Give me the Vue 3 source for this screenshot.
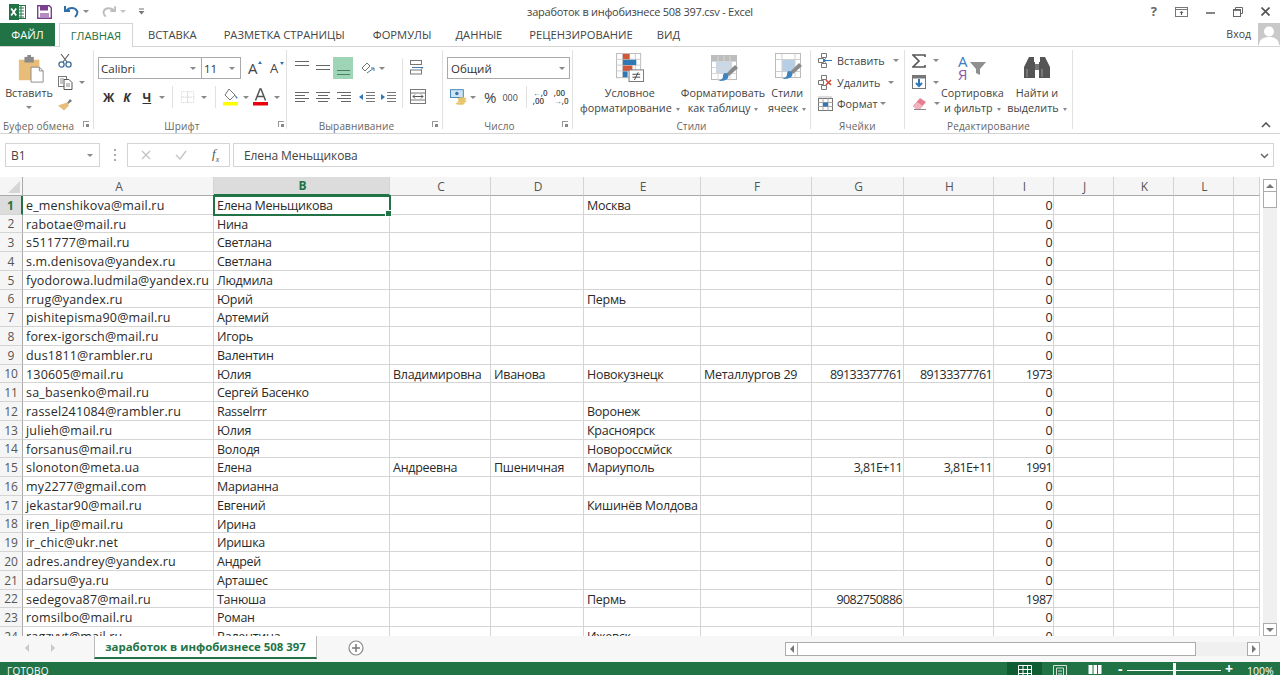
<script setup>
const tabs = [
  ['ВСТАВКА', 't1'], ['РАЗМЕТКА СТРАНИЦЫ', 't2'], ['ФОРМУЛЫ', 't3'],
  ['ДАННЫЕ', 't4'], ['РЕЦЕНЗИРОВАНИЕ', 't5'], ['ВИД', 't6'],
]
const cols = ['A', 'B', 'C', 'D', 'E', 'F', 'G', 'H', 'I', 'J', 'K', 'L', '']
const raw = [
  ['e_menshikova@mail.ru', 'Елена Меньщикова', '', '', 'Москва', '', '', '', '0'],
  ['rabotae@mail.ru', 'Нина', '', '', '', '', '', '', '0'],
  ['s511777@mail.ru', 'Светлана', '', '', '', '', '', '', '0'],
  ['s.m.denisova@yandex.ru', 'Светлана', '', '', '', '', '', '', '0'],
  ['fyodorowa.ludmila@yandex.ru', 'Людмила', '', '', '', '', '', '', '0'],
  ['rrug@yandex.ru', 'Юрий', '', '', 'Пермь', '', '', '', '0'],
  ['pishitepisma90@mail.ru', 'Артемий', '', '', '', '', '', '', '0'],
  ['forex-igorsch@mail.ru', 'Игорь', '', '', '', '', '', '', '0'],
  ['dus1811@rambler.ru', 'Валентин', '', '', '', '', '', '', '0'],
  ['130605@mail.ru', 'Юлия', 'Владимировна', 'Иванова', 'Новокузнецк', 'Металлургов 29', '89133377761', '89133377761', '1973'],
  ['sa_basenko@mail.ru', 'Сергей Басенко', '', '', '', '', '', '', '0'],
  ['rassel241084@rambler.ru', 'Rasselrrr', '', '', 'Воронеж', '', '', '', '0'],
  ['julieh@mail.ru', 'Юлия', '', '', 'Красноярск', '', '', '', '0'],
  ['forsanus@mail.ru', 'Володя', '', '', 'Новороссмйск', '', '', '', '0'],
  ['slonoton@meta.ua', 'Елена', 'Андреевна', 'Пшеничная', 'Мариуполь', '', '3,81E+11', '3,81E+11', '1991'],
  ['my2277@gmail.com', 'Марианна', '', '', '', '', '', '', '0'],
  ['jekastar90@mail.ru', 'Евгений', '', '', 'Кишинёв Молдова', '', '', '', '0'],
  ['iren_lip@mail.ru', 'Ирина', '', '', '', '', '', '', '0'],
  ['ir_chic@ukr.net', 'Иришка', '', '', '', '', '', '', '0'],
  ['adres.andrey@yandex.ru', 'Андрей', '', '', '', '', '', '', '0'],
  ['adarsu@ya.ru', 'Арташес', '', '', '', '', '', '', '0'],
  ['sedegova87@mail.ru', 'Танюша', '', '', 'Пермь', '', '9082750886', '', '1987'],
  ['romsilbo@mail.ru', 'Роман', '', '', '', '', '', '', '0'],
  ['ragzvvt@mail.ru', 'Валентина', '', '', 'Ижевск', '', '', '', '0'],
]
const rows = raw.map((r, i) => ({ n: i + 1, cells: [...r, '', '', '', ''] }))
</script>

<template>
  <div class="app">
    <header class="titlebar">
      <div class="qat">
        <svg class="q-xl" width="17" height="16" viewBox="0 0 17 16"><rect x="6" y="1.5" width="10.5" height="13" fill="#fff" stroke="#217346"/><path d="M9 4h6M9 7h6M9 10h6M9 13h6M12 2v12" stroke="#217346"/><rect width="10" height="16" fill="#217346"/><path d="M2.2 4.5l5 7M7.2 4.5l-5 7" stroke="#fff" stroke-width="1.8"/></svg>
        <svg class="q-save" width="15" height="14" viewBox="0 0 15 14"><path d="M.7.7h11.6l2 2v10.6H.7z" fill="#fff" stroke="#7b3f8f" stroke-width="1.4"/><rect x="3" y="1" width="8" height="4.5" fill="#7b3f8f"/><rect x="3" y="8" width="9" height="5" fill="#b58cc2"/></svg>
        <svg class="q-undo" width="15" height="13" viewBox="0 0 15 13"><path d="M1 1v5h5" fill="none" stroke="#2f6fa8" stroke-width="2"/><path d="M2 6c3-4 9-4 11 0 1 2 0 4-2 6" fill="none" stroke="#2f6fa8" stroke-width="2"/></svg>
        <span class="caret q-c1"></span>
        <svg class="q-redo" width="14" height="13" viewBox="0 0 15 13"><path d="M14 1v5H9" fill="none" stroke="#bdbdbd" stroke-width="2"/><path d="M13 6C10 2 4 2 2 6c-1 2 0 4 2 6" fill="none" stroke="#bdbdbd" stroke-width="2"/></svg>
        <span class="caret pale q-c2"></span>
        <svg class="q-cust" width="7" height="7" viewBox="0 0 7 7"><path d="M1 1h5" stroke="#777"/><path d="M.5 3h6L3.5 6.5z" fill="#777"/></svg>
      </div>
      <div class="title">заработок в инфобизнесе 508 397.csv - Excel</div>
      <div class="winbtns">
        <span class="help">?</span>
        <svg width="13" height="10" viewBox="0 0 13 10"><rect x=".5" y=".5" width="12" height="9" fill="none" stroke="#777"/><path d="M.5 2.5h12" stroke="#777"/><path d="M6.5 4l-2 2h1.4v2h1.2V6h1.4z" fill="#555"/></svg>
        <svg width="9" height="10" viewBox="0 0 9 10"><path d="M0 6h9" stroke="#666" stroke-width="1.6"/></svg>
        <svg width="10" height="10" viewBox="0 0 10 10"><path d="M2.500 2.500V.5h7v6h-2" fill="none" stroke="#666"/><rect x=".5" y="2.500" width="7" height="7" fill="none" stroke="#666"/><path d="M.5 3.200h7" stroke="#666" stroke-width="1.300"/></svg>
        <svg width="9" height="9" viewBox="0 0 9 9"><path d="M.5.5l8 8M8.500.5l-8 8" stroke="#555" stroke-width="1.700"/></svg>
      </div>
    </header>

    <nav class="tabsbar">
      <div class="tab-file">ФАЙЛ</div>
      <div class="tab-home">ГЛАВНАЯ</div>
      <div v-for="t in tabs" :key="t[0]" class="tab" :class="t[1]">{{ t[0] }}</div>
      <div class="signin">
        <span>Вход</span>
        <svg class="avatar" width="22" height="22" viewBox="0 0 22 22"><rect width="22" height="22" fill="#c9c9c9"/><circle cx="11" cy="8.5" r="5" fill="#fff"/><path d="M1 22c0-6 5-8 10-8s10 2 10 8z" fill="#fff"/></svg>
      </div>
    </nav>

    <section class="ribbon">
      <div class="grp g-clip">
        <div class="grp-body">
          <div class="big paste">
            <svg class="big-ic" width="28" height="29" viewBox="0 0 30 31"><path d="M2 5h22v22H2z" fill="#e7bd79"/><rect x="8" y="2" width="10" height="6" fill="#8a8a8a"/><rect x="11" y="0" width="4" height="3" fill="#8a8a8a"/><path d="M15 13h9l4 4v12H15z" fill="#fff" stroke="#888"/><path d="M24 13v4h4" fill="none" stroke="#888"/></svg>
            <span class="big-t">Вставить</span>
            <span class="caret big-c"></span>
          </div>
          <div class="smalls clip-s">
            <svg width="14" height="14" viewBox="0 0 14 14"><path d="M3 0l6 8M11 0L5 8" stroke="#666" stroke-width="1.2"/><circle cx="3.5" cy="10.5" r="2.6" fill="none" stroke="#3f6e9c" stroke-width="1.3"/><circle cx="10.5" cy="10.5" r="2.6" fill="none" stroke="#3f6e9c" stroke-width="1.3"/></svg>
            <div class="s-line">
              <svg width="15" height="14" viewBox="0 0 15 14"><rect x=".5" y=".5" width="8" height="10" fill="#fff" stroke="#777"/><path d="M6 3.5h5l3 3v7H6z" fill="#fff" stroke="#555"/><path d="M2 3h4M2 5h3M2 7h3M8 8h4M8 10h4" stroke="#8a8a8a"/></svg>
              <span class="caret clip-c"></span>
            </div>
            <svg width="15" height="14" viewBox="0 0 15 14"><path d="M9 6l3-4 2 2-4 3z" fill="#777"/><path d="M9 5.500l2 3-5 5-6-5z" fill="#e7bd79"/></svg>
          </div>
        </div>
        <div class="grp-lab lab-clip">Буфер обмена<span class="launch l-clip"></span></div>
      </div>

      <div class="grp g-font">
        <div class="grp-body col">
          <div class="frow">
            <div class="combo c-font"><span>Calibri</span><span class="caret"></span></div>
            <div class="combo c-size"><span>11</span><span class="caret"></span></div>
            <span class="growA">A<i class="up"></i></span>
            <span class="growA smallA">A<i class="down"></i></span>
          </div>
          <div class="frow2">
            <b class="fb">Ж</b>
            <b class="fi">К</b>
            <b class="fu">Ч</b>
            <span class="caret f-c1"></span>
            <span class="vsep vs1"></span>
            <svg class="f-bord" width="14" height="13" viewBox="0 0 17 15"><rect x=".5" y=".5" width="15" height="13" fill="none" stroke="#c9c9c9" stroke-dasharray="1 1"/><path d="M8 .5v13M.5 7h15" stroke="#bbb" stroke-dasharray="1 1"/></svg>
            <span class="caret f-c2"></span>
            <span class="vsep vs2"></span>
            <svg class="f-fill" width="16" height="18" viewBox="0 0 16 18"><path d="M6 1l6 6-5 5-5-5z" fill="#fff" stroke="#777"/><path d="M12 7c2 1 3 3 2 4-1-1-2-2-2-4z" fill="#4a83b5"/><rect y="14" width="15" height="3.500" fill="#ffff00"/></svg>
            <span class="caret f-c3"></span>
            <svg class="f-col" width="15" height="18" viewBox="0 0 15 18"><path d="M2.500 12.500L7 1h1l4.500 11.500M4.200 8.500h6.600" fill="none" stroke="#555" stroke-width="1.500"/><rect y="14" width="15" height="3.500" fill="#e8000b"/></svg>
            <span class="caret f-c4"></span>
          </div>
        </div>
        <div class="grp-lab lab-font">Шрифт<span class="launch l-font"></span></div>
      </div>

      <div class="grp g-align">
        <div class="grp-body alignbody">
          <div class="col">
            <div class="arow">
              <svg width="15" height="22" viewBox="0 0 15 22" class="a1"><path d="M0 4.500h14M0 8.500h14" stroke="#666"/></svg>
              <svg width="14" height="22" viewBox="0 0 14 22" class="a2"><path d="M0 8.500h14M0 12.500h14" stroke="#666"/></svg>
              <span class="a3"><svg width="13" height="22" viewBox="0 0 13 22"><path d="M0 13.500h13M0 17.500h13" stroke="#4f7f63"/></svg></span>
              <svg width="16" height="14" viewBox="0 0 16 14" class="a4"><path d="M2 7l5-5 3 3-5 5z" fill="none" stroke="#777"/><path d="M7 12l7-5M11 7h3v3" fill="none" stroke="#4a7da8"/></svg>
              <span class="caret a5"></span>
            </div>
            <div class="arow arow2">
              <svg width="15" height="12" viewBox="0 0 15 12" class="a1"><path d="M0 1.500h14M0 4.500h10M0 7.500h14M0 10.500h10" stroke="#666"/></svg>
              <svg width="14" height="12" viewBox="0 0 14 12" class="a2"><path d="M0 1.500h14M2 4.500h10M0 7.500h14M2 10.500h10" stroke="#666"/></svg>
              <svg width="14" height="12" viewBox="0 0 14 12" class="a6"><path d="M0 1.500h14M4 4.500h10M0 7.500h14M4 10.500h10" stroke="#666"/></svg>
              <svg width="16" height="12" viewBox="0 0 16 12" class="a7"><path d="M7 1.500h9M7 4.500h9M7 7.500h9M7 10.500h9" stroke="#777"/><path d="M0 6l4-3v6z" fill="#2f77b5"/></svg>
              <svg width="16" height="12" viewBox="0 0 16 12" class="a8"><path d="M7 1.500h9M7 4.500h9M7 7.500h9M7 10.500h9" stroke="#777"/><path d="M5 6L1 3v6z" fill="#2f77b5"/></svg>
            </div>
          </div>
          <span class="vsep vs3"></span>
          <div class="col acol2">
            <svg width="16" height="15" viewBox="0 0 16 15"><rect x=".5" y=".5" width="11" height="4" fill="none" stroke="#777"/><rect x=".5" y="10" width="11" height="4" fill="none" stroke="#777"/><path d="M2 7.500h11l-2 2" fill="none" stroke="#3c7ab0"/></svg>
            <svg class="am" width="16" height="15" viewBox="0 0 16 15"><rect x=".5" y=".5" width="15" height="14" fill="none" stroke="#777"/><path d="M.5 4h15M.5 11h15" stroke="#777"/><path d="M3 7.500h10M3 7.500l2-2M3 7.500l2 2M13 7.500l-2-2M13 7.500l-2 2" stroke="#555" fill="none"/></svg>
          </div>
        </div>
        <div class="grp-lab lab-align">Выравнивание<span class="launch l-align"></span></div>
      </div>

      <div class="grp g-num">
        <div class="grp-body col">
          <div class="combo c-num"><span>Общий</span><span class="caret"></span></div>
          <div class="nrow">
            <svg class="n1" width="18" height="16" viewBox="0 0 21 18"><rect x=".5" y=".5" width="15" height="9" fill="#cfe3f2" stroke="#2f77b5"/><circle cx="8" cy="5" r="2" fill="#2f77b5"/><ellipse cx="14" cy="11" rx="5" ry="1.800" fill="#e9c46a"/><ellipse cx="14" cy="14" rx="5" ry="1.800" fill="#e9c46a"/><ellipse cx="12" cy="16.500" rx="5" ry="1.500" fill="#e9c46a"/></svg>
            <span class="caret n2"></span>
            <span class="pct">%</span>
            <span class="thou">000</span>
            <span class="vsep vs4"></span>
            <span class="dec d1"><i>←</i>,0<br>,00</span>
            <span class="dec d2">,00<br><i>→</i>,0</span>
          </div>
        </div>
        <div class="grp-lab lab-num">Число<span class="launch l-num"></span></div>
      </div>

      <div class="grp g-styles">
        <div class="grp-body">
          <div class="big st1">
            <svg class="big-ic" width="29" height="29" viewBox="0 0 30 30"><rect x=".5" y=".5" width="25" height="25" fill="#fff" stroke="#bbb"/><path d="M.5 6.500h25M.5 12.500h25M.5 18.500h25M7 .5v25M14 .5v25M20 .5v25" stroke="#ccc"/><rect x="7" y="1" width="7" height="5.500" fill="#d0573a"/><rect x="7" y="7" width="14" height="5.500" fill="#2f77b5"/><rect x="7" y="13" width="10" height="5.500" fill="#d0573a"/><rect x="7" y="19" width="5" height="6" fill="#2f77b5"/><rect x="13.500" y="17.500" width="15" height="12" fill="#fff" stroke="#777"/><path d="M17 22h8M17 25h8M23 20l-4 8" stroke="#444" fill="none"/></svg>
            <span class="big-t">Условное</span>
            <span class="big-t">форматирование<i class="caret inl"></i></span>
          </div>
          <div class="big st2">
            <svg class="big-ic" width="28" height="28" viewBox="0 0 28 28"><rect x=".5" y=".5" width="25" height="24" fill="#fff" stroke="#bbb"/><rect x="1" y="1" width="24" height="5" fill="#bdbdbd"/><rect x="5" y="6" width="16" height="12" fill="#c7d8ea"/><path d="M.5 6.500h25M.5 12.500h25M.5 18.500h25M7 .5v25M13 .5v25M19 .5v25" stroke="#d6d6d6"/><path d="M15 19l9-9 3 3-9 8z" fill="#8a8a8a"/><path d="M14 18c3 0 4 3 3 5-2 3-7 3-10 3 3-1 5-2 5-5 0-2 1-3 2-3z" fill="#3c83c0"/></svg>
            <span class="big-t">Форматировать</span>
            <span class="big-t">как таблицу<i class="caret inl"></i></span>
          </div>
          <div class="big st3">
            <svg class="big-ic" width="28" height="28" viewBox="0 0 28 28"><rect x=".5" y=".5" width="25" height="24" fill="#fff" stroke="#bbb"/><rect x="7" y="6" width="13" height="12" fill="#b7cfe6"/><path d="M.5 6.500h25M.5 18.500h25M7 .5v25M20 .5v25" stroke="#cfcfcf"/><path d="M15 19l9-9 3 3-9 8z" fill="#8a8a8a"/><path d="M14 18c3 0 4 3 3 5-2 3-7 3-10 3 3-1 5-2 5-5 0-2 1-3 2-3z" fill="#3c83c0"/></svg>
            <span class="big-t">Стили</span>
            <span class="big-t">ячеек<i class="caret inl"></i></span>
          </div>
        </div>
        <div class="grp-lab lab-styles">Стили</div>
      </div>

      <div class="grp g-cells">
        <div class="grp-body col cells">
          <div class="cl">
            <svg width="15" height="15" viewBox="0 0 15 15"><path d="M3.500.5h5v4h-5zM3.500 10.500h5v4h-5zM.5 5.500h5v4h-5z" fill="#fff" stroke="#777"/><path d="M5 7.500h9M8 5.500l-3 2 3 2" fill="none" stroke="#2f77b5"/></svg>
            <span class="cl-t">Вставить</span><span class="caret cc1"></span>
          </div>
          <div class="cl">
            <svg width="15" height="15" viewBox="0 0 15 15"><path d="M3.500.5h5v4h-5zM3.500 10.500h5v4h-5zM.5 5.500h5v4h-5z" fill="#fff" stroke="#777"/><path d="M8 5l5 5M13 5l-5 5" stroke="#d3412d" stroke-width="1.500"/></svg>
            <span class="cl-t">Удалить</span><span class="caret cc2"></span>
          </div>
          <div class="cl">
            <svg width="15" height="15" viewBox="0 0 15 15"><rect x=".5" y="2.500" width="14" height="12" fill="#fff" stroke="#777"/><path d="M.5 1h14" stroke="#777" stroke-dasharray="1 1"/><path d="M.5 6.500h14M.5 10.500h14M5 2.500v12M10 2.500v12" stroke="#aaa"/><rect x="5" y="6.500" width="5" height="4" fill="#2f77b5"/></svg>
            <span class="cl-t">Формат</span><span class="caret cc3"></span>
          </div>
        </div>
        <div class="grp-lab lab-cells">Ячейки</div>
      </div>

      <div class="grp g-edit">
        <div class="grp-body">
          <div class="col ed-s">
            <div class="cl"><svg width="14" height="14" viewBox="0 0 14 14"><path d="M13 3V1H1l6 6-6 6h12v-2" fill="none" stroke="#555" stroke-width="1.600"/></svg><span class="caret ec"></span></div>
            <div class="cl"><svg width="14" height="14" viewBox="0 0 14 14"><rect x=".5" y=".5" width="13" height="13" fill="#fff" stroke="#777"/><rect x="1" y="1" width="12" height="2.500" fill="#777"/><path d="M7 4v7M4 8l3 3 3-3" fill="none" stroke="#2f77b5" stroke-width="2"/></svg><span class="caret ec"></span></div>
            <div class="cl"><svg width="15" height="13" viewBox="0 0 15 13"><path d="M1 9l7-8 6 4-6 7H4z" fill="#e77f93"/><path d="M1 9l4-4 6 4-3 3H4z" fill="#f1b3bd"/><path d="M2 12.500h12" stroke="#888"/></svg><span class="caret ec"></span></div>
          </div>
          <div class="big ed1">
            <svg class="big-ic sortic" width="30" height="27" viewBox="0 0 30 27"><text x="1" y="13" class="sort-a">А</text><text x="1" y="26" class="sort-y">Я</text><path d="M13 8h16l-6 7v6l-4-2v-4z" fill="#8f8f8f"/></svg>
            <span class="big-t">Сортировка</span>
            <span class="big-t">и фильтр<i class="caret inl"></i></span>
          </div>
          <div class="big ed2">
            <svg class="big-ic" width="26" height="25" viewBox="0 0 26 25"><path d="M5 2h5v5h1v16H0V12zM16 2h5l5 10v11H15V7h1z" fill="#555"/><rect x="11" y="9" width="4" height="6" fill="#777"/><path d="M3 14v8M18 14v8" stroke="#9a9a9a"/></svg>
            <span class="big-t">Найти и</span>
            <span class="big-t">выделить<i class="caret inl"></i></span>
          </div>
        </div>
        <div class="grp-lab lab-edit">Редактирование</div>
      </div>

      <div class="ribbon-end">
        <svg width="10" height="6" viewBox="0 0 10 6"><path d="M1 5l4-4 4 4" fill="none" stroke="#555" stroke-width="1.600"/></svg>
      </div>
    </section>

    <section class="fbar">
      <div class="namebox"><span>B1</span><span class="caret"></span></div>
      <span class="dots"></span>
      <div class="fxbox">
        <svg width="10" height="10" viewBox="0 0 10 10"><path d="M1 1l8 8M9 1l-8 8" stroke="#c4c4c4" stroke-width="1.300"/></svg>
        <svg width="12" height="10" viewBox="0 0 12 10"><path d="M1 5l4 4 6-8" fill="none" stroke="#c4c4c4" stroke-width="1.300"/></svg>
        <span class="fx">f<sub>x</sub></span>
      </div>
      <div class="finput">
        <span>Елена Меньщикова</span>
        <svg width="9" height="6" viewBox="0 0 9 6"><path d="M1 1l3.500 3.500L8 1" fill="none" stroke="#666" stroke-width="1.500"/></svg>
      </div>
    </section>

    <section class="sheetwrap">
      <div class="sheet">
        <div class="corner"><svg width="14" height="14" viewBox="0 0 14 14"><path d="M14 1v12H2z" fill="#d6d6d6"/></svg></div>
        <div v-for="(c, i) in cols" :key="'h' + i" class="ch" :class="{ act: c === 'B' }">{{ c }}</div>
        <template v-for="r in rows" :key="r.n">
          <div class="rh" :class="{ act: r.n === 1 }">{{ r.n }}</div>
          <div
            v-for="(v, ci) in r.cells"
            :key="ci"
            class="cell"
            :class="{ lat: ci === 0, num: ci >= 6 && ci <= 8, sel: r.n === 1 && ci === 1 }"
          >{{ v }}</div>
        </template>
      </div>
      <div class="vscroll">
        <div class="sbtn up"><span class="tri-up"></span></div>
        <div class="vthumb"></div>
        <div class="vtrack"></div>
        <div class="sbtn"><span class="tri-down"></span></div>
      </div>
    </section>

    <section class="sheetbar">
      <div class="nav"><span class="tri-l"></span><span class="tri-r"></span></div>
      <div class="sheet-tab">заработок в инфобизнесе 508 397</div>
      <svg class="plus" width="16" height="16" viewBox="0 0 16 16"><circle cx="8" cy="8" r="7" fill="#fff" stroke="#8a8a8a" stroke-width="1.200"/><path d="M8 4v8M4 8h8" stroke="#777" stroke-width="1.500"/></svg>
      <div class="hscroll">
        <div class="sbtn hb"><span class="tri-l dark"></span></div>
        <div class="hthumb"></div>
        <div class="htrack"></div>
        <div class="sbtn hb"><span class="tri-r dark"></span></div>
      </div>
    </section>

    <footer class="status">
      <span class="ready">ГОТОВО</span>
      <div class="view on"><svg width="14" height="13" viewBox="0 0 14 13"><path d="M.5.500h13v12H.5zM.5 4.500h13M.5 8.500h13M5 .5v12M9.500.5v12" fill="none" stroke="#fff"/></svg></div>
      <div class="view"><svg width="14" height="13" viewBox="0 0 14 13"><path d="M.5.500h13v12H.5z" fill="none" stroke="#cfe3d8"/><path d="M3.500 3h7v10h-7zM5 6h4M5 9h4" fill="none" stroke="#cfe3d8"/></svg></div>
      <div class="view"><svg width="14" height="13" viewBox="0 0 14 13"><path d="M.5 0h13v9H.5z" fill="#fff"/><path d="M5 0v9M9.500 0v9" stroke="#217346"/></svg></div>
      <span class="zm">-</span>
      <div class="slider"><i></i></div>
      <span class="zp">+</span>
      <span class="pc">100%</span>
    </footer>
  </div>
</template>

<style scoped>
.app {
  width: 1280px;
  height: 675px;
  overflow: hidden;
  background: #fff;
  font-family: "Open Sans", "Noto Sans", sans-serif;
  color: #444;
  display: flex;
  flex-direction: column;
}
.caret {
  display: inline-block;
  width: 0;
  height: 0;
  border-left: 3px solid transparent;
  border-right: 3px solid transparent;
  border-top: 3px solid #888;
  flex: none;
}
.caret.pale { border-top-color: #c4c4c4; }
.caret.inl { margin-left: 4px; vertical-align: middle; border-left-width: 2.5px; border-right-width: 2.5px; }

.titlebar {
  height: 23px;
  flex: none;
  display: grid;
  grid-template-columns: 1fr auto 1fr;
  align-items: center;
}
.qat { display: flex; align-items: center; padding-left: 9px; }
.q-save { margin-left: 11px; }
.q-undo { margin-left: 12px; }
.q-c1 { margin-left: 4px; }
.q-redo { margin-left: 13px; }
.q-c2 { margin-left: 4px; }
.q-cust { margin-left: 12px; }
.title { font-size: 11px; color: #444; letter-spacing: -0.25px; }
.winbtns { display: flex; justify-content: flex-end; align-items: center; gap: 18px; padding-right: 10px; }
.help { font-size: 13px; font-weight: 700; color: #666; line-height: 1; }

.tabsbar {
  height: 23px;
  flex: none;
  display: flex;
  font-size: 11.2px;
  line-height: 23px;
  border-bottom: 1px solid #d4d4d4;
  position: relative;
}
.tab-file { width: 55px; background: #217346; color: #fff; text-align: center; }
.tab-home {
  margin-left: 4px;
  width: 74px;
  box-sizing: border-box;
  border: 1px solid #d4d4d4;
  border-bottom: 0;
  background: #fff;
  height: 24px;
  color: #217346;
  text-align: center;
}
.tab { white-space: nowrap; }
.t1 { margin-left: 15px; }
.t2 { margin-left: 27px; }
.t3 { margin-left: 28px; }
.t4 { margin-left: 24px; }
.t5 { margin-left: 27px; }
.t6 { margin-left: 24px; }
.signin { margin-left: auto; display: flex; align-items: flex-start; gap: 7px; font-size: 10.500px; }

.ribbon {
  height: 86px;
  flex: none;
  display: flex;
  border-bottom: 1px solid #d4d4d4;
  font-size: 10.8px;
  color: #444;
}
.grp {
  flex: none;
  box-sizing: border-box;
  height: 79px;
  margin-top: 3px;
  border-right: 1px solid #e1e1e1;
  display: flex;
  flex-direction: column;
  position: relative;
}
.grp-body { height: 69px; display: flex; flex: none; box-sizing: border-box; }
.col { display: flex; flex-direction: column; }
.grp-lab {
  font-size: 10px;
  color: #666;
  line-height: 14px;
  text-align: center;
  white-space: nowrap;
  letter-spacing: 0.15px;
}
.launch {
  position: absolute;
  width: 6px;
  height: 6px;
  bottom: 2px;
  border-left: 1px solid #999;
  border-top: 1px solid #999;
  box-sizing: border-box;
}
.launch::after {
  content: "";
  position: absolute;
  right: 0;
  bottom: 0;
  width: 3px;
  height: 3px;
  background: #888;
}
.g-clip { width: 94px; }
.g-font { width: 193px; }
.g-align { width: 156px; }
.g-num { width: 130px; }
.g-styles { width: 238px; }
.g-cells { width: 94px; }
.g-edit { width: 168px; }
.lab-clip { text-align: left; padding-left: 3px; }
.l-clip { left: 83px; }
.l-font { left: 184px; }
.l-align { left: 145px; }
.l-num { left: 119px; }
.lab-font { padding-right: 16px; }
.lab-num { padding-right: 16px; }
.lab-align { padding-right: 16px; }

.big {
  display: grid;
  grid-template-rows: 35px 15px 15px;
  justify-items: center;
  flex: none;
}
.big-ic { margin-top: 4px; }
.sortic { overflow: visible; }
.big-t { line-height: 15px; white-space: nowrap; }
.paste { width: 58px; }
.paste .big-ic { margin-left: 3px; margin-top: 5px; }
.big-c { align-self: center; }
.smalls { display: flex; flex-direction: column; }
.clip-s { gap: 7.500px; padding-top: 4px; }
.s-line { display: flex; align-items: center; }
.clip-c { margin-left: 6px; }

.g-font .grp-body { padding-left: 4px; }
.frow { display: flex; align-items: center; padding-top: 7px; }
.combo {
  box-sizing: border-box;
  height: 22px;
  border: 1px solid #aaa;
  background: #fff;
  display: flex;
  align-items: center;
  justify-content: space-between;
  padding: 0 5px 0 2px;
  font-size: 11.500px;
  color: #333;
  flex: none;
}
.c-font { width: 104px; }
.c-size { width: 40px; margin-left: -1px; }
.growA { position: relative; font-size: 15px; margin-left: 7px; color: #444; width: 16px; line-height: 1; }
.smallA { font-size: 13px; margin-left: 6px; }
.growA i { position: absolute; top: 0; left: 10px; width: 0; height: 0; border-left: 2.5px solid transparent; border-right: 2.5px solid transparent; }
.growA .up { border-bottom: 3px solid #2f77b5; }
.growA .down { border-top: 3px solid #2f77b5; }
.frow2 { display: flex; align-items: center; height: 20px; margin-top: 8px; }
.fb, .fi, .fu { font-size: 12px; color: #333; font-weight: 700; }
.fb { margin-left: 5px; }
.fi { margin-left: 9px; font-style: italic; }
.fu { margin-left: 12px; text-decoration: underline; }
.f-c1 { margin-left: 8px; }
.vsep { width: 1px; height: 22px; background: #e1e1e1; flex: none; }
.vs1 { margin-left: 7px; }
.f-bord { margin-left: 8px; }
.f-c2 { margin-left: 6px; }
.vs2 { margin-left: 8px; }
.f-fill { margin-left: 7px; }
.f-c3 { margin-left: 4px; }
.f-col { margin-left: 4px; }
.f-c4 { margin-left: 6px; }

.alignbody { padding-left: 8px; }
.arow { display: flex; align-items: center; height: 22px; margin-top: 7px; }
.arow2 { margin-top: 7px; }
.a2 { margin-left: 6px; }
.a3 { margin-left: 3px; width: 20px; height: 22px; background: #9fd5b7; display: flex; justify-content: center; flex: none; }
.a4 { margin-left: 7px; }
.a5 { margin-left: 3px; }
.a6 { margin-left: 7px; }
.a7 { margin-left: 8px; }
.a8 { margin-left: 5px; }
.vs3 { margin: 8px 0 0 6px; height: 50px; }
.acol2 { padding: 10px 0 0 7px; }
.am { margin-top: 14px; }

.g-num .grp-body { padding-left: 4px; }
.c-num { width: 123px; margin-top: 7px; padding-right: 4px; padding-left: 3px; }
.nrow { display: flex; align-items: center; height: 22px; margin-top: 7px; padding-left: 3px; }
.n2 { margin-left: 2px; }
.pct { font-size: 15px; margin-left: 8px; }
.thou { font-size: 9px; margin-left: 6px; }
.vs4 { margin-left: 8px; }
.dec { font-size: 8px; line-height: 8px; font-weight: 600; width: 15px; white-space: nowrap; }
.dec i { font-style: normal; color: #2f77b5; }
.d1 { margin-left: 6px; }
.d2 { margin-left: 6px; }

.g-styles .grp-body { padding-left: 7px; }
.st1 { width: 98px; }
.st2 { width: 90px; }
.st3 { width: 38px; }
.st1 .big-ic { margin-left: 2px; margin-top: 3px; }
.st2 .big-ic { margin-left: 3px; margin-top: 5px; }
.st3 .big-ic { margin-left: 3px; margin-top: 3px; }

.cl { display: flex; align-items: center; height: 21.500px; white-space: nowrap; }
.cl svg { flex: none; }
.cells { padding: 0 0 0 7px; }
.cl-t { margin-left: 4px; }
.cc1 { margin-left: 8px; }
.cc2 { margin-left: 8px; }
.cc3 { margin-left: 2px; }

.ed-s { width: 40px; padding: 0 0 0 7px; box-sizing: border-box; }
.ec { margin-left: 7px; }
.ed1 { width: 58px; }
.ed2 { width: 70px; margin-left: 3px; }
.ed1 .big-ic { margin-top: 4px; }
.ed2 .big-ic { margin-top: 5px; }
.sort-a { font-family: "Open Sans", sans-serif; font-size: 15px; fill: #3b7bbf; }
.sort-y { font-family: "Open Sans", sans-serif; font-size: 15px; fill: #8d5aa8; }
.ribbon-end { flex: 1; display: flex; justify-content: flex-end; align-items: flex-end; padding: 0 9px 5px 0; }

.fbar {
  height: 43px;
  flex: none;
  box-sizing: border-box;
  display: flex;
  align-items: flex-start;
  padding: 9px 5px 0;
  font-size: 12px;
}
.namebox, .fxbox, .finput {
  box-sizing: border-box;
  height: 24px;
  border: 1px solid #d4d4d4;
  background: #fff;
  display: flex;
  align-items: center;
  flex: none;
}
.namebox { width: 95px; justify-content: space-between; padding: 1px 6px 0 5px; }
.dots { width: 2px; height: 12px; margin: 6px 11px 0 14px; background: repeating-linear-gradient(#aaa 0 2px, transparent 2px 5px); flex: none; }
.fxbox { width: 103px; padding-left: 13px; gap: 24px; }
.fx { font-family: "Liberation Serif", serif; font-style: italic; font-size: 13px; margin-left: 1px; color: #555; }
.fx sub { font-size: 8px; }
.finput { margin-left: 3px; width: 1041px; padding: 1px 4px 0 10px; justify-content: space-between; letter-spacing: -0.1px; }

.sheetwrap {
  height: 459px;
  flex: none;
  display: flex;
  overflow: hidden;
}
.sheet {
  width: 1260px;
  flex: none;
  display: grid;
  grid-template-columns: 23px 191px 176px 101px 93px 117px 111px 92px 90px 60px 60px 60px 60px 26px;
  grid-auto-rows: 18.76px;
  align-content: start;
  font-size: 12.500px;
  color: #2a2a2a;
  position: relative;
  box-shadow: inset 0 -1px #aaa, inset -1px 0 #aaa;
}
.sheet > * { box-sizing: border-box; overflow: hidden; white-space: nowrap; }
.corner, .ch, .rh {
  background: #f5f5f5;
  border-right: 1px solid #d4d4d4;
  border-bottom: 1px solid #d4d4d4;
  color: #555;
  font-size: 12px;
}
.corner { border-right-color: #aaa; border-bottom-color: #aaa; display: flex; justify-content: flex-end; align-items: flex-end; padding: 0 2px 1px 0; }
.ch { display: flex; align-items: center; justify-content: center; border-bottom-color: #aaa; padding: 1px 0 0 2px; }
.rh { display: flex; align-items: center; justify-content: center; border-right-color: #aaa; padding-top: 1px; }
.act { background: #dcdcdc; color: #217346; font-weight: 700; }
.ch.act { border-bottom: 2px solid #217346; }
.rh.act { border-right: 2px solid #217346; }
.cell {
  border-right: 1px solid #d4d4d4;
  border-bottom: 1px solid #d4d4d4;
  padding: 1px 1px 0 3px;
  line-height: 18px;
  background: #fff;
  letter-spacing: -0.27px;
}
.cell.lat { letter-spacing: 0.18px; }
.cell.num { text-align: right; letter-spacing: -0.6px; }
.sheet > .sel {
  overflow: visible;
  outline: 2px solid #217346;
  outline-offset: -1px;
  position: relative;
  z-index: 2;
}
.sel::after {
  content: "";
  position: absolute;
  right: -3px;
  bottom: -3px;
  width: 5px;
  height: 5px;
  background: #217346;
  border: 1px solid #fff;
}

.vscroll {
  margin-left: 3px;
  width: 14px;
  flex: none;
  display: flex;
  flex-direction: column;
  padding-top: 2px;
}
.sbtn {
  box-sizing: border-box;
  width: 14px;
  height: 13px;
  background: #fff;
  border: 1px solid #ababab;
  display: flex;
  align-items: center;
  justify-content: center;
  flex: none;
}
.vthumb { height: 16px; width: 14px; box-sizing: border-box; background: #fff; border: 1px solid #ababab; border-top: 0; flex: none; }
.vtrack { flex: 1; width: 14px; background: #f0f0f0; }
.tri-up { border-left: 4px solid transparent; border-right: 4px solid transparent; border-bottom: 4px solid #777; }
.tri-down { border-left: 4px solid transparent; border-right: 4px solid transparent; border-top: 4px solid #777; }
.tri-l, .tri-r { display: inline-block; width: 0; height: 0; border-top: 4px solid transparent; border-bottom: 4px solid transparent; }
.tri-l { border-right: 4px solid #c8c8c8; }
.tri-r { border-left: 4px solid #c8c8c8; }
.tri-l.dark { border-right-color: #777; }
.tri-r.dark { border-left-color: #777; }

.sheetbar {
  height: 26px;
  flex: none;
  box-sizing: border-box;
  display: flex;
  background: #f7f7f7;
  position: relative;
}
.nav { width: 94px; flex: none; display: flex; gap: 22px; padding: 8px 0 0 25px; box-sizing: border-box; }
.sheet-tab {
  width: 223px;
  height: 23px;
  flex: none;
  box-sizing: border-box;
  background: #fff;
  border-left: 1px solid #bbb;
  border-right: 1px solid #bbb;
  border-bottom: 2px solid #217346;
  text-align: center;
  color: #217346;
  font-size: 11.400px;
  font-weight: 700;
  line-height: 21px;
}
.plus { margin: 4px 0 0 31px; flex: none; }
.hscroll { position: absolute; left: 785px; top: 6px; width: 475px; height: 14px; display: flex; }
.hb { height: 14px; width: 13px; }
.hthumb { width: 398px; flex: none; background: #fff; border: 1px solid #ababab; box-sizing: border-box; border-left: 0; }
.htrack { flex: 1; background: #f0f0f0; }

.status {
  height: 13px;
  flex: none;
  background: #217346;
  color: #fff;
  font-size: 10px;
  display: flex;
  align-items: flex-start;
  overflow: hidden;
  position: relative;
}
.ready { margin-left: 7px; line-height: 19px; letter-spacing: 0.2px; }
.view { width: 35px; height: 13px; display: flex; justify-content: center; padding-top: 3px; box-sizing: border-box; flex: none; }
.view.on { margin-left: auto; background: #0f5c33; }
.zm { margin-left: 6px; font-weight: 700; line-height: 14px; width: 7px; font-size: 14px; flex: none; }
.slider { width: 94px; height: 1px; background: #fff; margin: 8px 0 0 2px; position: relative; flex: none; }
.slider i { position: absolute; left: 46px; top: -7px; width: 3px; height: 15px; background: #fff; }
.zp { margin-left: 4px; width: 8px; font-size: 14px; font-weight: 700; line-height: 14px; flex: none; }
.pc { margin: 0 0 0 14px; width: 33px; line-height: 19px; font-size: 10.500px; flex: none; white-space: nowrap; }
</style>

<style>
html, body { margin: 0; padding: 0; overflow: hidden; background: #fff; }
</style>
